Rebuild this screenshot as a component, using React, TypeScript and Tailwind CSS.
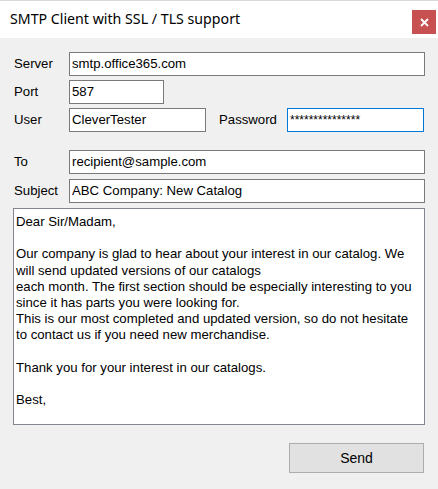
import React from "react";

const font = { fontFamily: '"Liberation Sans", Arial, sans-serif' };

function Field({ value, className }: { value: string; className: string }) {
  return (
    <div
      className={`h-[24px] border bg-white pl-[2px] flex items-center text-[13.2px] text-black leading-none whitespace-nowrap overflow-hidden ${className}`}
    >
      {value}
    </div>
  );
}

function Label({ text }: { text: string }) {
  return <div className="w-[56px] pl-px text-[13.2px] text-black leading-none">{text}</div>;
}

export default function App() {
  const body = [
    "Dear Sir/Madam,",
    "",
    "Our company is glad to hear about your interest in our catalog. We",
    "will send updated versions of our catalogs",
    "each month. The first section should be especially interesting to you",
    "since it has parts you were looking for.",
    "This is our most completed and updated version, so do not hesitate",
    "to contact us if you need new merchandise.",
    "",
    "Thank you for your interest in our catalogs.",
    "",
    "Best,",
  ];
  return (
    <div className="w-[438px] h-[489px] bg-[#f0f0f0] flex flex-col overflow-hidden" style={font}>
      <div className="h-[38px] bg-white border-t border-[#d9d9d9] flex items-start justify-between shrink-0">
        <div
          className="pl-[10px] pt-[8px] text-[14.2px] text-black leading-[20px]"
          style={{ fontFamily: '"Noto Sans", "Open Sans", sans-serif' }}
        >
          SMTP Client with SSL / TLS support
        </div>
        <div className="mt-[9px] mr-[2px] w-[24px] h-[24px] bg-[#c75050] flex items-center justify-center">
          <svg width="9" height="9" viewBox="0 0 9 9">
            <path d="M1 1 L8 8 M8 1 L1 8" stroke="white" strokeWidth="1.8" />
          </svg>
        </div>
      </div>
      <div className="flex-1 px-[13px] pt-[14px] flex flex-col">
        <div className="flex items-center">
          <Label text="Server" />
          <Field value="smtp.office365.com" className="w-[356px] border-[#7a7a7a]" />
        </div>
        <div className="flex items-center mt-[4px]">
          <Label text="Port" />
          <Field value="587" className="w-[95px] border-[#7a7a7a]" />
        </div>
        <div className="flex items-center mt-[4px]">
          <Label text="User" />
          <Field value="CleverTester" className="w-[137px] border-[#7a7a7a]" />
          <div className="w-[68px] ml-[13px] text-[13.2px] text-black leading-none">Password</div>
          <Field value="***************" className="w-[137px] border-[#0078d7] !text-[12px]" />
        </div>
        <div className="flex items-center mt-[18px]">
          <Label text="To" />
          <Field value="recipient@sample.com" className="w-[356px] border-[#7a7a7a]" />
        </div>
        <div className="flex items-center mt-[5px]">
          <Label text="Subject" />
          <Field value="ABC Company: New Catalog" className="w-[356px] border-[#7a7a7a]" />
        </div>
        <div className="mt-[5px] w-[412px] h-[217px] border border-[#828790] bg-white pl-[2px] pt-[5px] text-[13.2px] leading-[16.2px] text-black">
          {body.map((l, i) => (
            <div key={i} className="h-[16.2px] whitespace-nowrap">
              {l}
            </div>
          ))}
        </div>
        <div className="flex justify-end mt-[18px] pr-px">
          <div className="w-[135px] h-[30px] bg-[#e1e1e1] border border-[#adadad] flex items-center justify-center text-[14px] text-black">
            Send
          </div>
        </div>
      </div>
    </div>
  );
}
